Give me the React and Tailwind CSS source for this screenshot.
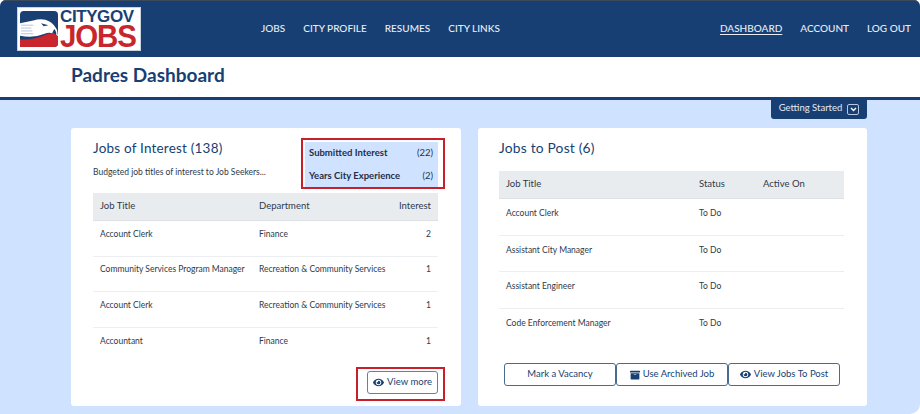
import React from "react";
import { FaEye, FaArchive } from "react-icons/fa";

const navy = "text-[#173f73]";

function Logo() {
  return (
    <div className="w-[124px] h-[44px] shrink-0 bg-white border border-[#c9d3e0] flex items-center pl-[2px] gap-[2px]">
      <svg width="38" height="38" viewBox="0 0 40 38" className="shrink-0">
        <rect x="0" y="0" width="40" height="38" rx="4" fill="#1a3f73" />
        <path d="M0 13 L14 10 Q24 7 31 11 Q36 14 39 20 L40 27 Q33 21 26 24 Q14 29 0 26 Z" fill="#ffffff" />
        <path d="M1 15H14M1 18H12M1 21H13M1 24H14" stroke="#9fb2cc" strokeWidth="0.8" />
        <path d="M22 13 L30 15 L25 16 Z" fill="#1a3f73" />
        <path d="M36 19 Q39 22 38 27 L34 23 Z" fill="#1a3f73" />
        <path d="M0 38 L0 30 Q16 31 29 24 Q36 22 40 27 L40 34 Q40 38 36 38 Z" fill="#c8262c" />
      </svg>
      <div className="flex flex-col items-start font-['Liberation_Sans',sans-serif] font-bold">
        <span className="text-[17px] leading-[15px] h-[15px] tracking-[-0.4px] text-[#1a3f73]">CITYGOV</span>
        <span className="text-[31px] leading-[26px] h-[26px] tracking-[-1.2px] text-[#c8262c] scale-x-[0.95] origin-left">JOBS</span>
      </div>
    </div>
  );
}

function NavLink({ children, active }) {
  return (
    <span className={`text-[10px] font-medium text-[#e9eef6] ${active ? "underline font-bold underline-offset-2" : ""}`}>
      {children}
    </span>
  );
}

function Btn({ icon, children, className = "" }) {
  return (
    <div className={`h-[23px] flex items-center justify-center gap-[3px] border border-[#4b6a93] rounded-[3px] bg-white text-[9.5px] ${navy} ${className}`}>
      {icon}
      <span>{children}</span>
    </div>
  );
}

function Cell({ className = "", children }) {
  return <div className={`text-[8.5px] text-[#2e3a4a] ${className}`}>{children}</div>;
}

const leftRows = [
  ["Account Clerk", "Finance", "2"],
  ["Community Services Program Manager", "Recreation & Community Services", "1"],
  ["Account Clerk", "Recreation & Community Services", "1"],
  ["Accountant", "Finance", "1"],
];
const rightRows = ["Account Clerk", "Assistant City Manager", "Assistant Engineer", "Code Enforcement Manager"];

export default function App() {
  return (
    <div className="w-[920px] h-[414px] overflow-hidden bg-white font-['Lato',sans-serif]">
      <div className="w-[920px] h-[414px] flex flex-col bg-[#cfe2ff] rounded-t-[6px] rounded-br-[10px] overflow-hidden">
        <header className="h-[57px] shrink-0 bg-[#173f73] border-t border-[#3c4a5c] flex items-center pl-[17px] pr-[9px]">
          <Logo />
          <nav className="flex items-center gap-[18px] ml-[120px] -mt-[2px]">
            <NavLink>JOBS</NavLink>
            <NavLink>CITY PROFILE</NavLink>
            <NavLink>RESUMES</NavLink>
            <NavLink>CITY LINKS</NavLink>
          </nav>
          <nav className="flex items-center gap-[18px] ml-auto -mt-[2px]">
            <NavLink active>DASHBOARD</NavLink>
            <NavLink>ACCOUNT</NavLink>
            <NavLink>LOG OUT</NavLink>
          </nav>
        </header>
        <div className="h-[43px] shrink-0 bg-white border-b-[3px] border-[#173f73] pl-[71px] flex items-center">
          <h1 className={`text-[19px] font-bold ${navy} -mt-[4px]`}>Padres Dashboard</h1>
        </div>
        <div className="flex justify-end pr-[53px] h-[28px] shrink-0 items-start">
          <div className="w-[96px] h-[19px] bg-[#173f73] rounded-b-[3px] flex items-center justify-center gap-[5px] text-[9.5px] text-[#e4eaf3]">
            <span className="-mt-[3px]">Getting Started</span>
            <span className="w-[12px] h-[11px] border border-[#b9c8dc] rounded-[2px] flex items-center justify-center">
              <svg width="7" height="5" viewBox="0 0 7 5"><path d="M1 1 L3.5 3.5 L6 1" fill="none" stroke="#ffffff" strokeWidth="1.4" /></svg>
            </span>
          </div>
        </div>
        <main className="flex gap-[17px] pl-[71px] h-[278px]">
          {/* Left card */}
          <section className="relative w-[390px] h-full bg-white rounded-[3px] pl-[22px] pr-[23px] flex flex-col">
            <div className="h-[65px] flex justify-between">
              <div>
                <h2 className={`text-[13.5px] tracking-[0.2px] ${navy} mt-[10px] leading-[20px]`}>Jobs of Interest (138)</h2>
                <p className="text-[8.5px] text-[#2e3a4a] mt-[8px] leading-[12px]">Budgeted job titles of interest to Job Seekers...</p>
              </div>
              <div className="w-[133px] h-[45px] mt-[14px] bg-[#cfe2ff] pl-[4px] pr-[5px] text-[9.5px] text-[#1f3250] flex flex-col justify-around">
                <div className="flex justify-between"><span className="font-bold text-[#1f2f4a]">Submitted Interest</span><span>(22)</span></div>
                <div className="flex justify-between"><span className="font-bold text-[#1f2f4a]">Years City Experience</span><span>(2)</span></div>
              </div>
            </div>
            <div className="h-[28px] bg-[#e9ecef] border-b border-[#dde1e6] flex items-center px-[7px] text-[9.5px] text-[#2e3a4a]">
              <span className="w-[159px]">Job Title</span>
              <span className="flex-1">Department</span>
              <span>Interest</span>
            </div>
            <div>
              {leftRows.map((r, i) => (
                <div key={i} className={`h-[35.5px] pb-[8px] flex items-center px-[7px] ${i < 3 ? "border-b border-[#eceef1]" : ""}`}>
                  <Cell className="w-[159px] whitespace-nowrap">{r[0]}</Cell>
                  <Cell className="flex-1 whitespace-nowrap">{r[1]}</Cell>
                  <Cell>{r[2]}</Cell>
                </div>
              ))}
            </div>
            <div className="flex justify-end mt-[8px]">
              <Btn icon={<FaEye size={11} />} className="w-[71px] h-[22px] border-[#6b7f9b]">View more</Btn>
            </div>
            <div className="absolute left-[230px] top-[10px] w-[144px] h-[51px] border-2 border-[#c8202a]" />
            <div className="absolute left-[285px] top-[239px] w-[89px] h-[34px] border-2 border-[#c8202a]" />
          </section>
          {/* Right card */}
          <section className="w-[389px] h-full bg-white rounded-[3px] pl-[21px] pr-[23px] flex flex-col">
            <h2 className={`text-[13.8px] tracking-[0.2px] ${navy} mt-[10px] leading-[20px]`}>Jobs to Post (6)</h2>
            <div className="mt-[13px] h-[28px] bg-[#e9ecef] border-b border-[#dde1e6] flex items-center px-[7px] text-[9.5px] text-[#2e3a4a]">
              <span className="w-[193px]">Job Title</span>
              <span className="w-[64px]">Status</span>
              <span>Active On</span>
            </div>
            <div>
              {rightRows.map((r, i) => (
                <div key={i} className={`h-[36.5px] pb-[6px] flex items-center px-[7px] ${i < 3 ? "border-b border-[#eceef1]" : ""}`}>
                  <Cell className="w-[193px] whitespace-nowrap">{r}</Cell>
                  <Cell>To Do</Cell>
                </div>
              ))}
            </div>
            <div className="flex pl-[5px] mt-[18px]">
              <Btn className="w-[112px]">Mark a Vacancy</Btn>
              <Btn icon={<FaArchive size={10} />} className="w-[112px]">Use Archived Job</Btn>
              <Btn icon={<FaEye size={11} />} className="w-[112px]">View Jobs To Post</Btn>
            </div>
          </section>
        </main>
      </div>
    </div>
  );
}
